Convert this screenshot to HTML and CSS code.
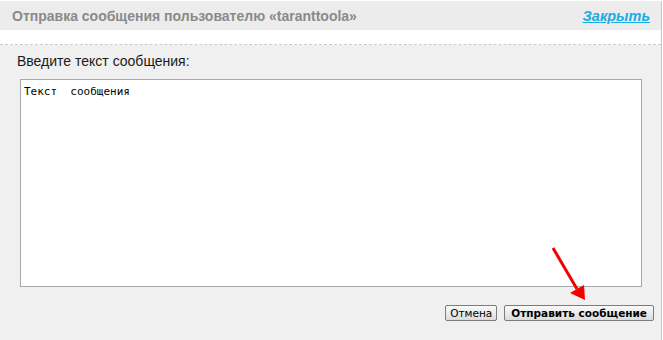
FILE: index.html
```html
<!DOCTYPE html>
<html>
<head>
  <meta charset="utf-8">
  <title>Отправка сообщения</title>
  <link rel="stylesheet" href="styles.css">
</head>
<body>
  <div class="dialog">
    <div class="head">
      <span class="head-title">Отправка сообщения пользователю «taranttoola»</span>
      <a class="close" href="#">Закрыть</a>
    </div>
    <div class="gap"></div>
    <div class="content">
      <label class="label" for="msg">Введите текст сообщения:</label>
      <textarea id="msg" class="msg">Текст  сообщения</textarea>
      <div class="buttons">
        <button class="btn btn-cancel">Отмена</button>
        <button class="btn btn-send">Отправить сообщение</button>
      </div>
    </div>
    <svg class="arrow" width="50" height="60" viewBox="0 0 50 60">
      <line x1="3" y1="3" x2="27" y2="44" stroke="#f40000" stroke-width="3"/>
      <polygon points="20,48 34,40 35,55" fill="#f40000"/>
    </svg>
  </div>
</body>
</html>
```

FILE: styles.css
```css
body {
  margin: 0;
  background: #fff;
  font-family: "DejaVu Sans", Tahoma, sans-serif;
}

* {
  box-sizing: border-box;
}

.dialog {
  position: relative;
  width: 662px;
  height: 339px;
  margin-top: 1px;
  background: #f0f0f0;
  border-right: 1px solid #c6c6c6;
}

.head {
  height: 29px;
  background: #ececec;
  display: flex;
  justify-content: space-between;
  align-items: center;
  padding: 0 11px 0 12px;
}

.head-title {
  font-family: "Liberation Sans", Arial, sans-serif;
  font-size: 14px;
  font-weight: bold;
  color: #8a8a8a;
}

.close {
  font-family: "Liberation Sans", Arial, sans-serif;
  font-size: 14.5px;
  font-weight: bold;
  font-style: italic;
  color: #18ace4;
}

.gap {
  height: 15px;
  background: #fff;
  border-bottom: 1px dashed #cacaca;
}

.content {
  padding: 8px 7px 0 17px;
}

.label {
  display: block;
  font-family: "Liberation Sans", Arial, sans-serif;
  font-size: 14px;
  line-height: 16px;
  color: #1a1a1a;
}

.msg {
  display: block;
  width: 622px;
  height: 208px;
  margin: 10px 0 0 3px;
  padding: 5px 3px;
  border: 1px solid #a9a9a9;
  background: #fff;
  font-family: "DejaVu Sans Mono", "Liberation Mono", monospace;
  font-size: 11px;
  color: #000;
  resize: none;
}

.buttons {
  display: flex;
  justify-content: flex-end;
  gap: 7px;
  margin-top: 18px;
}

.btn {
  height: 16px;
  padding: 0 6px;
  font-family: "DejaVu Sans", Tahoma, sans-serif;
  font-size: 10.5px;
  line-height: 14px;
  color: #000;
  background: linear-gradient(#fafafa, #dcdcdc);
  border: 1px solid #7c7c7c;
  border-radius: 2px;
}

.btn-cancel {
  padding: 0 4px;
}

.btn-send {
  font-weight: bold;
}

.arrow {
  position: absolute;
  left: 550px;
  top: 244px;
}
```
